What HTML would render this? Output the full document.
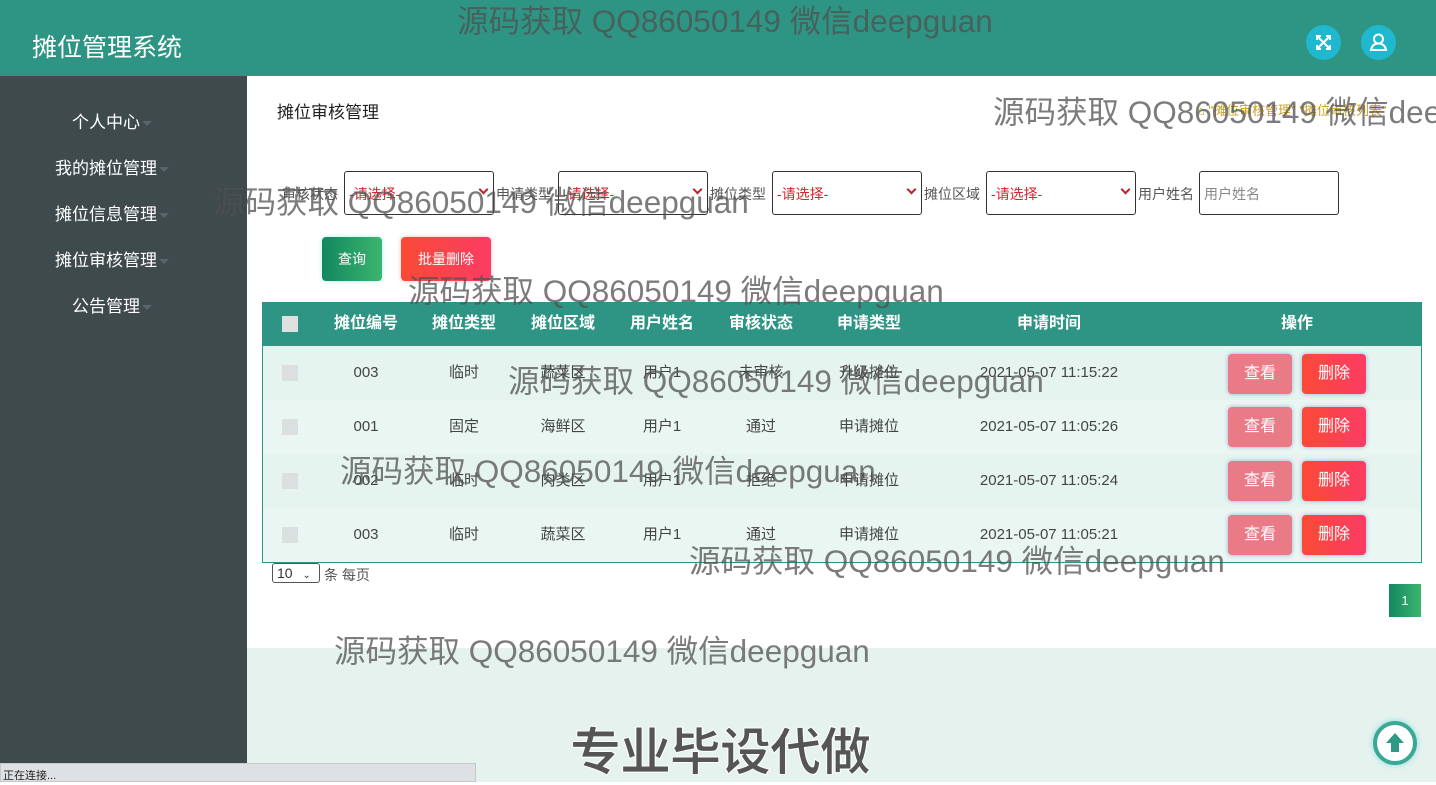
<!DOCTYPE html>
<html><head><meta charset="utf-8"><style>
*{margin:0;padding:0;box-sizing:border-box}
body{width:1436px;height:782px;overflow:hidden;position:relative;font-family:"Liberation Sans","Noto Sans CJK SC",sans-serif;background:#fff;font-size:14px;color:#333}
.abs{position:absolute}
.hdr{left:0;top:0;width:1436px;height:76px;background:#2e9585}
.side{left:0;top:76px;width:247px;height:706px;background:#3f4a4c}
.nav{color:#fff;font-size:17px;text-align:center;width:224px}
.nav span{display:inline-block;border-top:5px solid #59656a;border-left:5px solid transparent;border-right:5px solid transparent;margin-left:2px;vertical-align:middle}
.foot{left:247px;top:648px;width:1189px;height:134px;background:#e5f2ee}
.lbl{font-size:14px;color:#555}
.sel{height:44px;border:1px solid #333;border-radius:3px;background:#fff;color:#d0262d;font-size:14px;padding:12px 4px}
.sel i{position:absolute;right:6px;top:14px;width:7px;height:7px;border-right:2px solid #c0202a;border-bottom:2px solid #c0202a;transform:rotate(45deg)}
.th{top:302px;height:44px;line-height:44px;color:#fff;font-weight:bold;font-size:16px;text-align:center}
.td{height:54px;line-height:54px;font-size:15px;color:#444;text-align:center}
.cb{width:16px;height:16px;background:#dcdfe0}
.bv,.bd{width:64px;height:40px;border-radius:4px;color:#fff;font-size:16px;line-height:40px;text-align:center;box-shadow:0 0 4px #9ad}
.bv{background:#e97a86}
.bd{background:linear-gradient(90deg,#fa4a36,#fb3c64)}
.wm{color:rgba(80,80,80,.75);font-size:31.5px;white-space:nowrap;line-height:1}
</style></head><body>
<div class="abs hdr"></div>
<div class="abs" style="left:32px;top:28px;color:#fff;font-size:25px">摊位管理系统</div>
<div class="abs" style="left:1306px;top:25px;width:35px;height:35px;border-radius:50%;background:#1fb8cf"><svg width="35" height="35" viewBox="0 0 35 35" fill="none" stroke="#fff" stroke-width="2"><path d="M11 11l13 13M24 11L11 24M11 15v-4h4M20 11h4v4M24 20v4h-4M15 24h-4v-4"/></svg></div>
<div class="abs" style="left:1361px;top:25px;width:35px;height:35px;border-radius:50%;background:#1fb8cf"><svg width="35" height="35" viewBox="0 0 35 35" fill="none" stroke="#fff" stroke-width="2"><circle cx="17.5" cy="14" r="4.5"/><path d="M10 25c1-5 4-6.5 7.5-6.5s6.5 1.5 7.5 6.5z"/></svg></div>
<div class="abs side"></div>
<div class="abs nav" style="left:0;top:108px">个人中心<span></span></div>
<div class="abs nav" style="left:0;top:154px">我的摊位管理<span></span></div>
<div class="abs nav" style="left:0;top:200px">摊位信息管理<span></span></div>
<div class="abs nav" style="left:0;top:246px">摊位审核管理<span></span></div>
<div class="abs nav" style="left:0;top:292px">公告管理<span></span></div>
<div class="abs foot"></div>
<div class="abs" style="left:277px;top:98px;font-size:17px;color:#222">摊位审核管理</div>
<div class="abs" style="left:1197px;top:100px;font-size:13px;color:#c9a020">⌂ "摊位审核管理" "摊位审核列表"</div>

<div class="abs lbl" style="left:282px;top:184px">审核状态</div>
<div class="abs sel" style="left:344px;top:171px;width:150px">-请选择-<i></i></div>
<div class="abs lbl" style="left:496px;top:184px">申请类型</div>
<div class="abs sel" style="left:558px;top:171px;width:150px">-请选择-<i></i></div>
<div class="abs lbl" style="left:710px;top:184px">摊位类型</div>
<div class="abs sel" style="left:772px;top:171px;width:150px">-请选择-<i></i></div>
<div class="abs lbl" style="left:924px;top:184px">摊位区域</div>
<div class="abs sel" style="left:986px;top:171px;width:150px">-请选择-<i></i></div>
<div class="abs lbl" style="left:1138px;top:184px">用户姓名</div>
<div class="abs sel" style="left:1199px;top:171px;width:140px;color:#888">用户姓名</div>

<div class="abs" style="left:322px;top:237px;width:60px;height:44px;border-radius:4px;background:linear-gradient(90deg,#13875f,#3cb56f);color:#fff;text-align:center;line-height:44px;box-shadow:0 0 5px #aee">查询</div>
<div class="abs" style="left:401px;top:237px;width:90px;height:44px;border-radius:4px;background:linear-gradient(90deg,#fa4a36,#fb3c64);color:#fff;text-align:center;line-height:44px;box-shadow:0 0 5px #fbb">批量删除</div>

<div class="abs" style="left:262px;top:302px;width:1160px;height:261px;border:1px solid #2e9585;background:#e5f4ef"></div>
<div class="abs" style="left:262px;top:302px;width:1160px;height:44px;background:#2e9585"></div>
<div class="abs" style="left:263px;top:400px;width:1158px;height:54px;background:#e9f6f2"></div>
<div class="abs" style="left:263px;top:508px;width:1158px;height:54px;background:#e9f6f2"></div>
<div class="abs cb" style="left:282px;top:316px;background:#e0e0e0"></div>
<div class="abs th" style="left:316px;width:100px">摊位编号</div>
<div class="abs th" style="left:414px;width:100px">摊位类型</div>
<div class="abs th" style="left:513px;width:100px">摊位区域</div>
<div class="abs th" style="left:612px;width:100px">用户姓名</div>
<div class="abs th" style="left:711px;width:100px">审核状态</div>
<div class="abs th" style="left:819px;width:100px">申请类型</div>
<div class="abs th" style="left:969px;width:160px">申请时间</div>
<div class="abs th" style="left:1247px;width:100px">操作</div>

<div class="abs" style="left:0;top:346px">
<div class="abs cb" style="left:282px;top:19px"></div>
<div class="abs td" style="left:316px;width:100px">003</div><div class="abs td" style="left:414px;width:100px">临时</div><div class="abs td" style="left:513px;width:100px">蔬菜区</div><div class="abs td" style="left:612px;width:100px">用户1</div><div class="abs td" style="left:711px;width:100px">未审核</div><div class="abs td" style="left:819px;width:100px">升级摊位</div><div class="abs td" style="left:949px;width:200px">2021-05-07 11:15:22</div>
<div class="abs bv" style="left:1228px;top:8px">查看</div><div class="abs bd" style="left:1302px;top:8px">删除</div></div>
<div class="abs" style="left:0;top:400px">
<div class="abs cb" style="left:282px;top:19px"></div>
<div class="abs td" style="left:316px;width:100px">001</div><div class="abs td" style="left:414px;width:100px">固定</div><div class="abs td" style="left:513px;width:100px">海鲜区</div><div class="abs td" style="left:612px;width:100px">用户1</div><div class="abs td" style="left:711px;width:100px">通过</div><div class="abs td" style="left:819px;width:100px">申请摊位</div><div class="abs td" style="left:949px;width:200px">2021-05-07 11:05:26</div>
<div class="abs bv" style="left:1228px;top:7px">查看</div><div class="abs bd" style="left:1302px;top:7px">删除</div></div>
<div class="abs" style="left:0;top:454px">
<div class="abs cb" style="left:282px;top:19px"></div>
<div class="abs td" style="left:316px;width:100px">002</div><div class="abs td" style="left:414px;width:100px">临时</div><div class="abs td" style="left:513px;width:100px">肉类区</div><div class="abs td" style="left:612px;width:100px">用户1</div><div class="abs td" style="left:711px;width:100px">拒绝</div><div class="abs td" style="left:819px;width:100px">申请摊位</div><div class="abs td" style="left:949px;width:200px">2021-05-07 11:05:24</div>
<div class="abs bv" style="left:1228px;top:7px">查看</div><div class="abs bd" style="left:1302px;top:7px">删除</div></div>
<div class="abs" style="left:0;top:508px">
<div class="abs cb" style="left:282px;top:19px"></div>
<div class="abs td" style="left:316px;width:100px">003</div><div class="abs td" style="left:414px;width:100px">临时</div><div class="abs td" style="left:513px;width:100px">蔬菜区</div><div class="abs td" style="left:612px;width:100px">用户1</div><div class="abs td" style="left:711px;width:100px">通过</div><div class="abs td" style="left:819px;width:100px">申请摊位</div><div class="abs td" style="left:949px;width:200px">2021-05-07 11:05:21</div>
<div class="abs bv" style="left:1228px;top:7px">查看</div><div class="abs bd" style="left:1302px;top:7px">删除</div></div>

<div class="abs" style="left:272px;top:563px;width:48px;height:20px;border:1px solid #555;border-radius:3px;font-size:14px;padding:1px 4px;background:#fff">10 <span style="font-size:10px;margin-left:6px">⌄</span></div>
<div class="abs" style="left:324px;top:565px;font-size:14px;color:#555">条 每页</div>
<div class="abs" style="left:1389px;top:584px;width:32px;height:33px;background:linear-gradient(90deg,#13875f,#3cb56f);color:#fff;font-size:13px;text-align:center;line-height:33px">1</div>

<div class="abs" style="left:1373px;top:721px;width:44px;height:44px;border-radius:50%;border:4px solid #3aa894;background:#fff;box-shadow:0 0 6px #8dd"><svg width="36" height="36" viewBox="0 0 36 36"><path d="M18 8l-9 10h5v9h8v-9h5z" fill="#2e9a86"/></svg></div>

<div class="abs wm" style="left:457px;top:6px">源码获取 QQ86050149 微信deepguan</div>
<div class="abs wm" style="left:993px;top:97px">源码获取 QQ86050149 微信deepguan</div>
<div class="abs wm" style="left:213px;top:187px">源码获取 QQ86050149 微信deepguan</div>
<div class="abs wm" style="left:408px;top:276px">源码获取 QQ86050149 微信deepguan</div>
<div class="abs wm" style="left:508px;top:366px">源码获取 QQ86050149 微信deepguan</div>
<div class="abs wm" style="left:340px;top:456px">源码获取 QQ86050149 微信deepguan</div>
<div class="abs wm" style="left:689px;top:546px">源码获取 QQ86050149 微信deepguan</div>
<div class="abs wm" style="left:334px;top:636px">源码获取 QQ86050149 微信deepguan</div>
<div class="abs" style="left:570px;top:711px;font-size:51px;font-weight:bold;color:#555;-webkit-text-stroke:1px #fff;letter-spacing:-1px">专业毕设代做</div>
<div class="abs" style="left:0;top:763px;width:476px;height:19px;background:#dee1e4;border:1px solid #c8c8c8;font-size:11px;padding:3px 2px;color:#222">正在连接...</div>
</body></html>
